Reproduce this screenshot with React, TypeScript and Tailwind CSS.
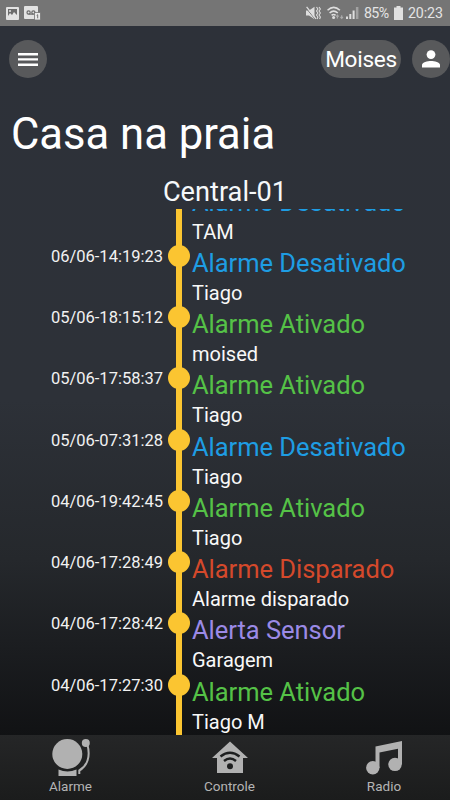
import React from "react";

type Entry = { time: string; title: string; detail: string; color: string };

const BLUE = "text-[#1e9de3]";
const GREEN = "text-[#55c247]";

const entries: Entry[] = [
  { time: "", title: "Alarme Desativado", detail: "TAM", color: BLUE },
  { time: "06/06-14:19:23", title: "Alarme Desativado", detail: "Tiago", color: BLUE },
  { time: "05/06-18:15:12", title: "Alarme Ativado", detail: "moised", color: GREEN },
  { time: "05/06-17:58:37", title: "Alarme Ativado", detail: "Tiago", color: GREEN },
  { time: "05/06-07:31:28", title: "Alarme Desativado", detail: "Tiago", color: BLUE },
  { time: "04/06-19:42:45", title: "Alarme Ativado", detail: "Tiago", color: GREEN },
  { time: "04/06-17:28:49", title: "Alarme Disparado", detail: "Alarme disparado", color: "text-[#d4492b]" },
  { time: "04/06-17:28:42", title: "Alerta Sensor", detail: "Garagem", color: "text-[#9b8ae6]" },
  { time: "04/06-17:27:30", title: "Alarme Ativado", detail: "Tiago M", color: GREEN },
];

function StatusBar() {
  return (
    <div className="flex h-[26px] shrink-0 items-center bg-[#757575] pl-[6px] pr-[7px] text-[#e4e4e4]">
      <svg width="13" height="13" viewBox="0 0 13 13">
        <rect width="13" height="13" rx="1" fill="#e2e2e2" />
        <path d="M2 2h9v6L8 5 6 8 4 6 2 9z" fill="#6b6b6b" />
        <circle cx="4" cy="4" r="1" fill="#e2e2e2" />
      </svg>
      <svg className="ml-[5px]" width="17" height="14" viewBox="0 0 17 14">
        <rect width="14" height="13" rx="1" fill="#e2e2e2" />
        <g fill="none" stroke="#6b6b6b" strokeWidth="1.2">
          <circle cx="4.6" cy="6.5" r="1.6" />
          <circle cx="9.4" cy="6.5" r="1.6" />
          <path d="M4.6 8.1h4.8" />
        </g>
        <rect x="10.5" y="6.5" width="6" height="7.5" fill="#e9e9e9" stroke="#757575" strokeWidth=".8" />
        <path d="M12.7 9.4l1-.7v3.6" fill="none" stroke="#666" strokeWidth=".9" />
      </svg>
      <div className="flex-1" />
      <svg width="15" height="14" viewBox="0 0 15 14">
        <path d="M0 4.5h3L8.5 .8v12.4L3 9.5H0z" fill="#dedede" />
        <path d="M0 2l9 11" stroke="#757575" strokeWidth="1" />
        <path d="M.6 .8l9.4 12" stroke="#dedede" strokeWidth="1.3" />
        <path d="M10.5 1l1.4 2-1.4 2 1.4 2-1.4 2 1.4 2-.8 2M13 1l1.4 2L13 5l1.4 2L13 9l1.4 2-.8 2" fill="none" stroke="#dedede" strokeWidth="1.1" />
      </svg>
      <svg className="ml-[6px]" width="17" height="14" viewBox="0 0 17 14">
        <g fill="none" stroke="#dedede" strokeWidth="1.6">
          <path d="M.5 4.3q6.2-6 12.4 0M2.6 7q4-3.8 8.2 0M4.6 9.4q2-1.8 4 0" />
        </g>
        <circle cx="6.6" cy="11.4" r="1.5" fill="#dedede" />
        <path d="M10.4 12.4V9.2M9.2 10.6l1.2-1.4 1.2 1.4M14.7 9.2v3.2M13.5 11l1.2 1.4 1.2-1.4" fill="none" stroke="#ababab" strokeWidth="1.2" />
      </svg>
      <svg className="ml-[2px]" width="13" height="14" viewBox="0 0 13 14">
        <path d="M0 10.5h2V13H0zM3.3 8h2v5h-2zM6.6 4.5h2V13h-2z" fill="#dedede" />
        <path d="M9.9 1h2.5v12H9.9z" fill="#a2a2a2" />
      </svg>
      <span className="ml-[5px] w-[27px] whitespace-nowrap text-[14.2px] leading-[27px] tracking-[-0.6px]">85%</span>
      <svg className="ml-[3px]" width="9" height="14" viewBox="0 0 9 14">
        <path d="M2.5 0h4v1.5H9V14H0V1.5h2.5z" fill="#e0e0e0" />
      </svg>
      <span className="ml-[5px] w-[35px] whitespace-nowrap text-[14.2px] leading-[27px] tracking-[-0.1px]">20:23</span>
    </div>
  );
}

function Header() {
  return (
    <header className="flex h-[66px] shrink-0 items-center pl-[9px]">
      <button className="flex size-[38px] items-center justify-center rounded-full bg-[#58595b]">
        <svg width="20" height="13" viewBox="0 0 20 13" fill="white">
          <path d="M0 0h20v2.4H0zM0 5.2h20v2.4H0zM0 10.5h20v2.4H0z" />
        </svg>
      </button>
      <div className="flex-1" />
      <button className="flex h-[38px] w-[80px] items-center justify-center rounded-full bg-[#58595b] pt-[2px] text-[22.6px] leading-none tracking-[-0.3px] text-white">
        Moises
      </button>
      <button className="ml-[11px] flex size-[38px] items-center justify-center rounded-full bg-[#58595b] pb-[1px]">
        <svg width="18" height="18" viewBox="0 0 18 18" fill="white">
          <circle cx="9" cy="4.6" r="4.4" />
          <path d="M0 17.5v-2.4C0 12.2 5.5 11 9 11s9 1.2 9 4.1v2.4z" />
        </svg>
      </button>
    </header>
  );
}

function TimelineRow({ entry }: { entry: Entry }) {
  return (
    <li className="flex h-[61.25px] shrink-0">
      <time className="w-[163px] text-right text-[16.5px] leading-[22.6px] text-[#f2f2f2]">{entry.time}</time>
      <div className="relative ml-[13px] w-[6px] bg-[#fbc531]">
        <span className="absolute -left-[8px] -top-[1px] size-[22px] rounded-full bg-[#fbc531]" />
      </div>
      <div className="ml-[10px] whitespace-nowrap">
        <div className={"text-[25.5px] leading-[34px] tracking-[-0.03px] " + entry.color}>{entry.title}</div>
        <div className="text-[20px] leading-[27.3px] text-[#f8f8f8]">{entry.detail}</div>
      </div>
    </li>
  );
}

function BellIcon() {
  return (
    <svg width="38" height="38" viewBox="0 0 38 38" fill="#b1b1b1">
      <circle cx="15.3" cy="15" r="15" />
      <path d="M6.5 30.5q9 3.8 18 0V37h-18z" />
      <circle cx="33.8" cy="4" r="4" />
      <path d="M35.5 6C38.5 17 35.5 27 27.3 31.5V35" fill="none" stroke="#b1b1b1" strokeWidth="2" />
    </svg>
  );
}

function HouseIcon() {
  return (
    <svg width="38" height="34" viewBox="0 0 38 34">
      <path d="M19 .5L37 17h-5v15H6V17H1z" fill="#b1b1b1" />
      <g fill="none" stroke="#1d1e1f" strokeWidth="2.4">
        <path d="M9.5 15.5q9.5-7.4 19 0M13 20q6-5 12 0" />
      </g>
      <circle cx="19" cy="25.3" r="3" fill="#1d1e1f" />
    </svg>
  );
}

function MusicIcon() {
  return (
    <svg width="36" height="34" viewBox="0 0 36 34" fill="#b1b1b1">
      <path d="M9.5 5.5L36 0v23.5h-4V7.7L13.5 11.5V27h-4z" />
      <circle cx="6.8" cy="26.8" r="6.7" />
      <circle cx="29" cy="23.4" r="6.7" />
    </svg>
  );
}

export default function App() {
  return (
    <div className="flex h-[800px] w-[450px] flex-col overflow-hidden bg-[linear-gradient(180deg,#2d3139_0%,#2d3138_50%,#25282c_70%,#111214_92%)] font-['Roboto',sans-serif]">
      <StatusBar />
      <Header />
      <h1 className="mt-[14px] h-[56px] shrink-0 pl-[11px] text-[43.6px] leading-[57px] text-white">Casa na praia</h1>
      <h2 className="mt-[13px] h-[34px] shrink-0 text-center text-[27.2px] leading-[34px] text-[#f5f8fa]">Central-01</h2>
      <ul className="flex h-[526px] shrink-0 flex-col overflow-hidden">
        <li className="-mt-[24.4px]" />
        {entries.map((entry) => (
          <TimelineRow key={entry.time} entry={entry} />
        ))}
      </ul>
      <nav className="flex h-[65px] shrink-0 bg-[linear-gradient(180deg,#252627,#1b1c1c)] text-[13.5px] leading-[17px] text-[#b4b4b4]">
        <div className="ml-[40px] flex w-[61px] flex-col items-center pt-[4px]">
          <div className="flex h-[39px] pl-[1px]"><BellIcon /></div>
          <span>Alarme</span>
        </div>
        <div className="ml-[98px] flex w-[61px] flex-col items-center pt-[4px]">
          <div className="flex h-[39px] pt-[2px]"><HouseIcon /></div>
          <span>Controle</span>
        </div>
        <div className="ml-[94px] flex w-[60px] flex-col items-center pt-[4px]">
          <div className="flex h-[39px] pt-[2px]"><MusicIcon /></div>
          <span>Radio</span>
        </div>
      </nav>
    </div>
  );
}
